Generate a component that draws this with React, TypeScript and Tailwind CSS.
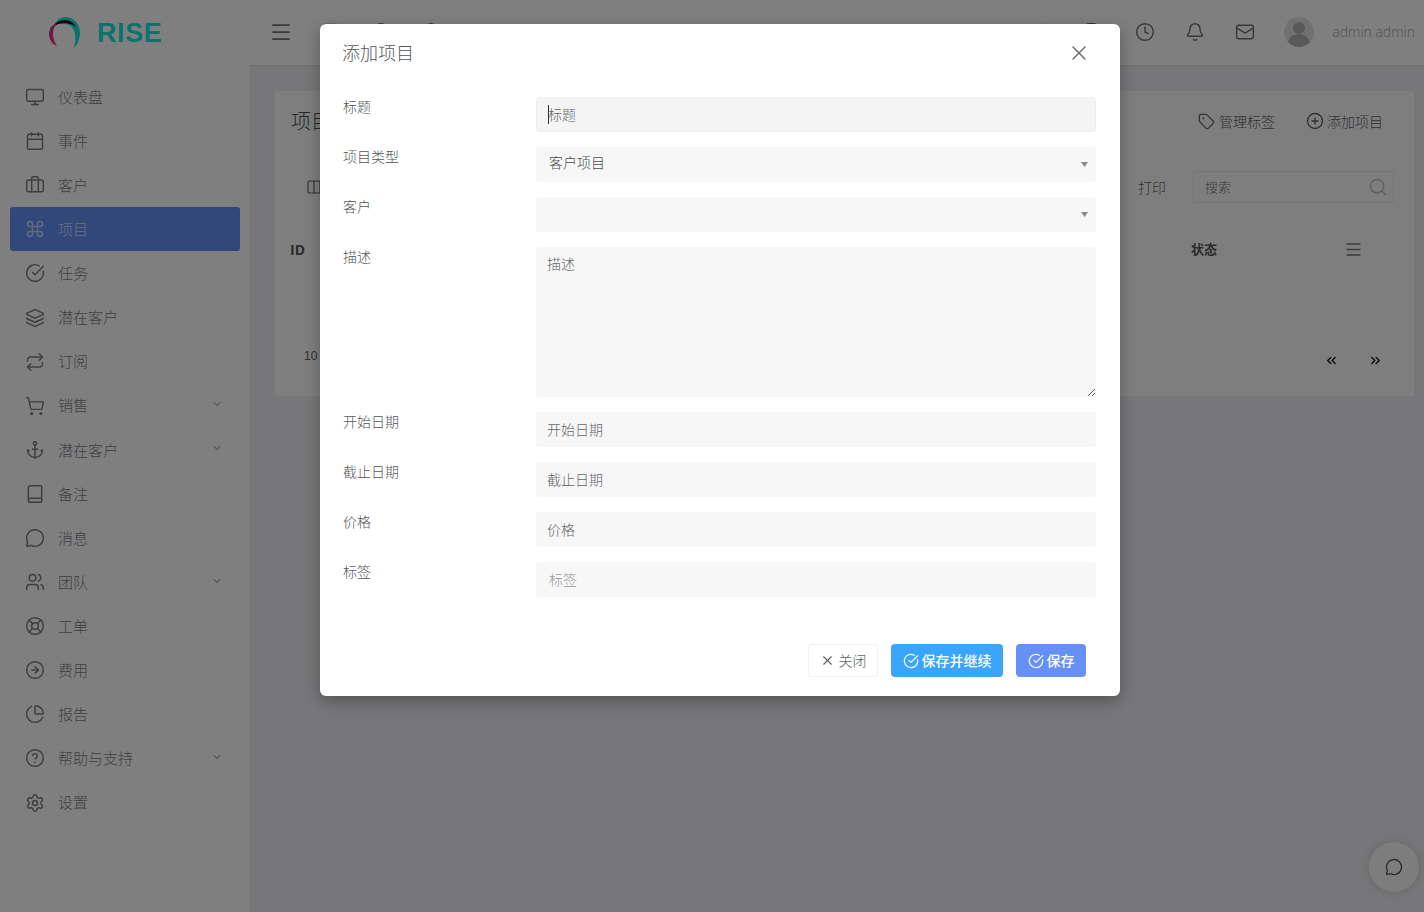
import {
  Anchor,
  Bell,
  Book,
  Briefcase,
  Calendar,
  ChartPie,
  ChevronDown,
  ChevronsLeft,
  ChevronsRight,
  CircleArrowRight,
  CircleCheckBig,
  CircleHelp,
  CirclePlus,
  Clock,
  Columns2,
  Command,
  Grid2x2,
  Layers,
  LifeBuoy,
  Mail,
  Menu,
  MessageCircle,
  Monitor,
  Repeat,
  Search,
  Settings,
  ShoppingCart,
  Tag,
  Users,
  X,
} from "lucide-react";

const font = { fontFamily: '"Noto Sans CJK SC", "Noto Sans", sans-serif' };

const navItems = [
  { label: "仪表盘", icon: Monitor },
  { label: "事件", icon: Calendar },
  { label: "客户", icon: Briefcase },
  { label: "项目", icon: Command, active: true },
  { label: "任务", icon: CircleCheckBig },
  { label: "潜在客户", icon: Layers },
  { label: "订阅", icon: Repeat },
  { label: "销售", icon: ShoppingCart, more: true },
  { label: "潜在客户", icon: Anchor, more: true },
  { label: "备注", icon: Book },
  { label: "消息", icon: MessageCircle },
  { label: "团队", icon: Users, more: true },
  { label: "工单", icon: LifeBuoy },
  { label: "费用", icon: CircleArrowRight },
  { label: "报告", icon: ChartPie },
  { label: "帮助与支持", icon: CircleHelp, more: true },
  { label: "设置", icon: Settings },
];

function Logo() {
  return (
    <div className="flex h-[66px] w-[250px] shrink-0 items-center pl-[48px]">
      <svg width="32" height="34" viewBox="0 0 32 34">
        <path d="M7 7C10 3 13 1 17 1c9 0 15 7 15 16 0 6-2 11-6 15 1-5 2-9 1-14C26 12 22 8 16 8c-3 0-6 0-9-1z" fill="#17e6d8" />
        <path d="M2 15C4 9 10 4 17 4c5 0 9 3 11 7-4-3-8-4-12-4C10 7 5 10 2 15z" fill="#0a0a12" />
        <path d="M1 18c0-3 1-5 2-7 1-1 3-3 6-4-3 3-4 7-4 11 0 5 2 9 4 12-5-2-8-7-8-12z" fill="#d8387f" />
        <path d="M4 25c1 3 3 4 5 5-3-1-5-2-6-4z" fill="#f2b84b" />
      </svg>
      <span
        className="ml-[17px] text-[27px] font-bold tracking-[0.6px] text-[#15e8d8]"
        style={{ fontFamily: '"Liberation Sans", sans-serif' }}
      >
        RISE
      </span>
    </div>
  );
}

function Sidebar() {
  return (
    <aside className="flex w-[250px] shrink-0 flex-col bg-white px-[10px] pt-[9px]">
      {navItems.map((item, i) => {
        const Icon = item.icon;
        return (
          <div
            key={i}
            className={`flex h-[44.1px] items-center rounded-[3px] pl-[15px] pr-[17px] text-[15px] ${
              item.active ? "bg-[#6690f4] text-[#d5e0fb]" : "text-[#808186]"
            }`}
          >
            <Icon size={20} strokeWidth={1.75} className={item.active ? "text-[#c4d5fb]" : "text-[#7b7c81]"} />
            <span className="ml-[13px] flex-1 font-light">{item.label}</span>
            {item.more && <ChevronDown size={12} className="-mt-[3px] text-[#7b7c81]" />}
          </div>
        );
      })}
    </aside>
  );
}

function Topbar() {
  return (
    <header className="flex h-[66px] flex-1 items-center border-b border-[#e2e2e2] bg-white pb-[2px] pl-[19px] pr-[9px] text-[#707176]">
      <Menu size={24} strokeWidth={1.75} />
      <Grid2x2 size={20} strokeWidth={1.75} className="ml-[28px]" />
      <Clock size={20} strokeWidth={1.75} className="ml-[30px]" />
      <Bell size={20} strokeWidth={1.75} className="ml-[30px]" />
      <Mail size={20} strokeWidth={1.75} className="ml-[30px]" />
      <div className="flex-1" />
      <Search size={20} strokeWidth={1.75} />
      <Tag size={20} strokeWidth={1.75} className="ml-[30px]" />
      <Clock size={20} strokeWidth={1.75} className="ml-[30px]" />
      <Bell size={20} strokeWidth={1.75} className="ml-[30px]" />
      <Mail size={20} strokeWidth={1.75} className="ml-[30px]" />
      <svg width="30" height="30" viewBox="0 0 30 30" className="ml-[29px]">
        <circle cx="15" cy="15" r="15" fill="#e3e3e3" />
        <circle cx="15" cy="11" r="6" fill="#b2b2b2" />
        <path d="M4 25c2-6 7-8 11-8s9 2 11 8c-3 3-7 5-11 5s-8-2-11-5z" fill="#b2b2b2" />
      </svg>
      <span className="ml-[18px] text-[14px] font-light text-[#a2a3a8]" style={{ fontFamily: '"Open Sans", sans-serif' }}>
        admin admin
      </span>
    </header>
  );
}

function ProjectsCard() {
  return (
    <section className="flex h-[305px] flex-col rounded-[3px] bg-[#fdfdfd] text-[#626367]">
      <div className="flex h-[60px] items-center pl-[16px] pr-[31px]">
        <h1 className="flex-1 text-[20px] font-light text-[#4b4c50]">项目</h1>
        <span className="flex items-center gap-[4px] text-[14px] font-light">
          <Tag size={17} strokeWidth={1.75} /> 管理标签
        </span>
        <span className="ml-[31px] flex items-center gap-[3px] text-[14px] font-light">
          <CirclePlus size={18} strokeWidth={1.75} /> 添加项目
        </span>
      </div>
      <div className="mt-[20px] flex h-[32px] items-center pl-[31px] pr-[20px]">
        <Columns2 size={16} strokeWidth={1.75} />
        <div className="flex-1" />
        <span className="text-[14px] font-light">打印</span>
        <div className="ml-[27px] flex h-[32px] w-[201px] items-center rounded-[2px] border border-[#ececec] pl-[11px] pr-[5px] text-[13px] font-light text-[#7d7e82]">
          <span className="flex-1">搜索</span>
          <Search size={20} strokeWidth={1.75} className="text-[#c0c1c4]" />
        </div>
      </div>
      <div className="mt-[26px] flex h-[40px] items-center pl-[15px] pr-[51px] text-[13px] font-bold text-[#55565a]">
        <span className="flex-1 text-[14px]" style={{ fontFamily: '"Open Sans", sans-serif' }}>ID</span>
        <span>状态</span>
        <Menu size={19} strokeWidth={2.1} className="ml-[127px] text-[#75767a]" />
      </div>
      <div className="mt-[84px] flex items-center pl-[29px] pr-[31px] text-[12px]">
        <span className="-mt-[9px] flex-1" style={{ fontFamily: '"Liberation Sans", sans-serif' }}>10</span>
        <ChevronsLeft size={15} strokeWidth={2.2} className="text-[#111]" />
        <ChevronsRight size={15} strokeWidth={2.2} className="ml-[29px] text-[#111]" />
      </div>
    </section>
  );
}

const inputClass =
  "h-[35px] w-[560px] rounded-[3px] bg-[#f7f7f8] px-[11px] pb-[2px] text-[14px] font-light text-[#565656] outline-none";

function Row({ label, children }: { label: string; children: React.ReactNode }) {
  return (
    <div className="mb-[15px] flex">
      <label className="-mt-px h-[20px] w-[193px] text-[14px] font-light leading-[20px] text-[#55565a]">{label}</label>
      {children}
    </div>
  );
}

function SelectBox({ value }: { value?: string }) {
  return (
    <div className="flex h-[35px] w-[560px] items-center justify-between rounded-[3px] bg-[#f7f7f8] pl-[13px] pr-[8px] text-[14px] font-light text-[#4c4c4e]">
      <span className="-mt-[5px]">{value}</span>
      <svg width="7" height="5" viewBox="0 0 7 5">
        <path d="M0 0h7L3.5 5z" fill="#888" />
      </svg>
    </div>
  );
}

function ProjectModal() {
  return (
    <div className="flex h-[672px] w-[800px] flex-col rounded-[6px] bg-white shadow-[0_5px_15px_rgba(0,0,0,0.3)]" style={font}>
      <div className="flex h-[73px] items-start justify-between pl-[22px] pr-[29px] pt-[14px]">
        <h2 className="text-[18px] font-light leading-[28px] text-[#56575b]">添加项目</h2>
        <X size={24} strokeWidth={1.5} className="mt-[3px] text-[#6f7074]" />
      </div>
      <form className="flex-1 pl-[23px]">
        <Row label="标题">
          <div className="relative">
            <input
              readOnly
              placeholder="标题"
              className="h-[35px] w-[560px] rounded-[4px] border border-[#efefef] bg-[#f4f4f4] px-[11px] pb-[2px] text-[14px] font-light outline-none placeholder:text-[#656669]"
            />
            <span className="absolute left-[12px] top-[8px] h-[19px] w-px bg-[#333]" />
          </div>
        </Row>
        <Row label="项目类型">
          <SelectBox value="客户项目" />
        </Row>
        <Row label="客户">
          <SelectBox />
        </Row>
        <Row label="描述">
          <textarea
            readOnly
            placeholder="描述"
            className="h-[150px] w-[560px] resize-y rounded-[3px] bg-[#f7f7f8] px-[11px] py-[6px] text-[14px] font-light text-[#565656] outline-none placeholder:text-[#656669]"
          />
        </Row>
        <Row label="开始日期">
          <input readOnly placeholder="开始日期" className={`${inputClass} placeholder:text-[#656669]`} />
        </Row>
        <Row label="截止日期">
          <input readOnly placeholder="截止日期" className={`${inputClass} placeholder:text-[#656669]`} />
        </Row>
        <Row label="价格">
          <input readOnly placeholder="价格" className={`${inputClass} placeholder:text-[#656669]`} />
        </Row>
        <Row label="标签">
          <input readOnly placeholder="标签" className={`${inputClass} !pl-[13px] placeholder:text-[#9a9a9a]`} />
        </Row>
      </form>
      <div className="flex justify-end gap-[13px] pb-[19px] pr-[34px] text-[14px]">
        <button type="button" className="flex h-[33px] w-[70px] items-center justify-center gap-[4px] rounded-[3px] border border-[#f2f2f2] font-light text-[#606165]">
          <X size={15} strokeWidth={1.75} /> 关闭
        </button>
        <button type="button" className="flex h-[33px] w-[112px] items-center justify-center gap-[3px] rounded-[4px] bg-[#3ba5fb] font-medium text-white">
          <CircleCheckBig size={16} strokeWidth={1.75} /> 保存并继续
        </button>
        <button type="button" className="flex h-[33px] w-[70px] items-center justify-center gap-[3px] rounded-[4px] bg-[#6690f4] font-medium text-white">
          <CircleCheckBig size={16} strokeWidth={1.75} /> 保存
        </button>
      </div>
    </div>
  );
}

export default function App() {
  return (
    <div className="relative flex h-[912px] w-[1424px] flex-col overflow-hidden bg-[#eeeef2]" style={font}>
      <div className="flex bg-white">
        <Logo />
        <Topbar />
      </div>
      <div className="flex flex-1">
        <Sidebar />
        <main className="flex-1 pl-[25px] pr-[10px] pt-[25px]">
          <ProjectsCard />
        </main>
      </div>
      <button type="button" className="absolute bottom-[20px] right-[5px] flex h-[50px] w-[50px] items-center justify-center rounded-full bg-[#fafafa] shadow-[0_0_10px_rgba(0,0,0,0.15)]">
        <MessageCircle size={18} strokeWidth={1.75} className="text-[#55565a]" />
      </button>
      <div className="absolute inset-0 flex justify-center bg-black/50 pl-[16px] pt-[24px]">
        <ProjectModal />
      </div>
    </div>
  );
}
